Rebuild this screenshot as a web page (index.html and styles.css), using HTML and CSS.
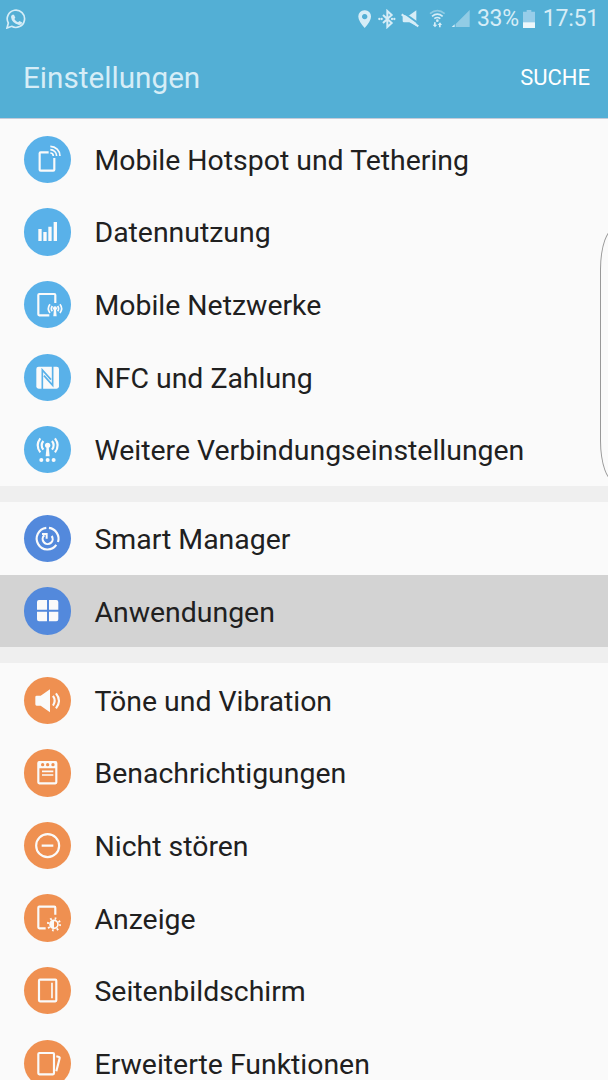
FILE: index.html
```html
<!DOCTYPE html>
<html lang="de">
<head>
	<meta charset="utf-8">
	<title>Einstellungen</title>
	<link rel="stylesheet" href="styles.css">
</head>
<body>
	<div class="phone">
		<div class="header">
			<div class="status">
				<svg class="whatsapp" viewBox="0 0 60 60" fill="none" stroke="#d6edf7">
					<path d="M3 57l4-15a26 26 0 1 1 10 10z" stroke-width="5"/>
					<path d="M19 17l5 0 4 9-3 4q4 7 11 10l4-4 8 4q0 8-9 8-22-6-24-24 0-5 4-7z" fill="#d6edf7" stroke="none"/>
				</svg>
				<svg class="signals" viewBox="0 0 339 60" fill="#d6edf7">
					<path fill-rule="evenodd" d="M20 4a18 18 0 0 1 19 19q0 12-19 34Q1 35 1 23A18 18 0 0 1 20 4zM20 15a8 8 0 1 0 .1 0z"/>
					<path d="M75 18l26 24-13 12V6l13 12-26 24" fill="none" stroke="#d6edf7" stroke-width="6"/>
					<circle cx="64" cy="30" r="3.500"/>
					<circle cx="71" cy="30" r="3.500"/>
					<circle cx="102" cy="30" r="3.500"/>
					<circle cx="109" cy="30" r="3.500"/>
					<path d="M134 19h20l21-15v47l-21-11h-16q-4 0-4-4z"/>
					<path d="M134 9l50 36" stroke="#53afd5" stroke-width="6"/>
					<path d="M131 16l50 36" stroke="#d6edf7" stroke-width="6"/>
					<g fill="none" stroke="#d6edf7" stroke-width="5">
						<path d="M216 14q22-18 44 0" opacity=".45"/>
						<path d="M222 22q16-13 32 0M229 29q9-7 18 0"/>
					</g>
					<circle cx="238" cy="35" r="4"/>
					<path d="M228 40h5v7h5l-7 8-7-8h4zM243 55h5v-7h4l-6-8-7 8h4z"/>
					<path d="M335 3v51h-42v-9z" opacity=".48"/>
					<path d="M281 54l9-8v8z"/>
				</svg>
				<span class="percent">33%</span>
				<svg class="battery" viewBox="0 0 36 54">
					<path d="M0 5h11V0h14v5h11v49H0z" fill="#97cde9"/>
					<path d="M0 37h36v17H0z" fill="#edf7fb"/>
				</svg>
				<span class="time">17:51</span>
			</div>
			<div class="bar">
				<span class="title">Einstellungen</span>
				<span class="search">SUCHE</span>
			</div>
		</div>
		<ul class="list connect">
			<li>
				<svg class="icon" viewBox="0 0 142 142">
					<path class="line" d="M74 49H50q-3 0-3 3v49q0 3 3 3h38q3 0 3-3V66"/>
					<path class="line thin" d="M79 51a9 9 0 0 1 9 9M79 41a19 19 0 0 1 19 19M79 31a29 29 0 0 1 29 29"/>
				</svg>
				<span>Mobile Hotspot und Tethering</span>
			</li>
			<li>
				<svg class="icon" viewBox="0 0 142 142">
					<path class="fill" d="M43 63h10v36H43zM58 72h10v27H58zM73 56h10v43H73zM89 42h10v57H89z"/>
				</svg>
				<span>Datennutzung</span>
			</li>
			<li>
				<svg class="icon" viewBox="0 0 142 142">
					<path class="line" d="M94 66V42q0-3-3-3H46q-3 0-3 3v58q0 3 3 3h30"/>
					<circle class="fill" cx="93" cy="82" r="6"/>
					<path class="fill" d="M90 84h6l2 22h-10z"/>
					<path class="line thin" d="M85 75q-6 8 0 16M101 75q6 8 0 16M78 70q-10 13 0 26M108 70q10 13 0 26"/>
				</svg>
				<span>Mobile Netzwerke</span>
			</li>
			<li>
				<svg class="icon" viewBox="0 0 142 142">
					<rect class="fill" x="37" y="38" width="68" height="66" rx="7"/>
					<path class="cut" d="M55 106V48L81 77M86 36V94L60 65"/>
				</svg>
				<span>NFC und Zahlung</span>
			</li>
			<li>
				<svg class="icon" viewBox="0 0 142 142">
					<circle class="fill" cx="71" cy="58" r="8"/>
					<path class="fill" d="M68 60h6l3 31H65z"/>
					<path class="line" d="M58 45q-10 13 0 26M84 45q10 13 0 26M49 37q-16 21 0 42M93 37q16 21 0 42"/>
					<circle class="fill" cx="52" cy="102" r="6"/>
					<circle class="fill" cx="71" cy="102" r="6"/>
					<circle class="fill" cx="89" cy="102" r="6"/>
				</svg>
				<span>Weitere Verbindungseinstellungen</span>
			</li>
		</ul>
		<ul class="list device">
			<li>
				<svg class="icon" viewBox="0 0 142 142">
					<path class="line" d="M67 38.700a32.500 32.500 0 1 0 30 51.300M102 81a32.500 32.500 0 0 0-27-42.300"/>
					<path class="line" d="M61 61a15 15 0 1 0 22 2"/>
					<path class="fill" d="M54 54h17v17h-6V60H54z"/>
				</svg>
				<span>Smart Manager</span>
			</li>
			<li class="active">
				<svg class="icon" viewBox="0 0 142 142">
					<path class="fill" d="M45 39h24v29H39V45q0-6 6-6zM75 39h22q6 0 6 6v23H75zM39 74h30v29H45q-6 0-6-6zM75 74h28v23q0 6-6 6H75z"/>
				</svg>
				<span>Anwendungen</span>
			</li>
		</ul>
		<ul class="list display">
			<li>
				<svg class="icon" viewBox="0 0 142 142">
					<path class="fill" d="M38 56h12l28-19v69L50 86H38q-4 0-4-4V60q0-4 4-4z"/>
					<path class="line" d="M87 57q10 14 0 29M96 49q18 22 0 45"/>
				</svg>
				<span>Töne und Vibration</span>
			</li>
			<li>
				<svg class="icon" viewBox="0 0 142 142">
					<rect class="line" x="43" y="39" width="54" height="64" rx="3"/>
					<path class="fill" d="M42 38h56v20H42z"/>
					<path class="line thin" d="M54 67h34M54 78h34"/>
					<circle class="dot" cx="56" cy="47" r="5"/>
					<circle class="dot" cx="71" cy="47" r="5"/>
					<circle class="dot" cx="87" cy="47" r="5"/>
				</svg>
				<span>Benachrichtigungen</span>
			</li>
			<li>
				<svg class="icon" viewBox="0 0 142 142">
					<circle class="line" cx="71" cy="71" r="34.500"/>
					<path class="line" d="M53 71h35"/>
				</svg>
				<span>Nicht stören</span>
			</li>
			<li>
				<svg class="icon" viewBox="0 0 142 142">
					<path class="line" d="M94 62V41q0-3-3-3H46q-3 0-3 3v59q0 3 3 3h19"/>
					<circle class="line rays" cx="90" cy="91" r="18"/>
					<circle class="line thin" cx="90" cy="91" r="12"/>
					<path class="fill" d="M90 79a12 12 0 0 0 0 24z"/>
				</svg>
				<span>Anzeige</span>
			</li>
			<li>
				<svg class="icon" viewBox="0 0 142 142">
					<rect class="line" x="45" y="38" width="52" height="65" rx="3"/>
					<path class="line thin" d="M84 47v47"/>
				</svg>
				<span>Seitenbildschirm</span>
			</li>
			<li>
				<svg class="icon" viewBox="0 0 142 142">
					<rect class="line" x="43" y="39" width="47" height="64" rx="3"/>
					<path class="line" d="M97 49l8 2q3 1 2 4l-10 39"/>
				</svg>
				<span>Erweiterte Funktionen</span>
			</li>
		</ul>
		<div class="edge"></div>
	</div>
</body>
</html>
```
FILE: styles.css
```css
body{
	margin: 0;
	background-color: #efefef;
	font-family: Roboto, sans-serif;
	color: #202020;
}
ul{
	list-style: none;
	margin: 0;
	padding: 0;
}
svg{
	display: block;
	flex: none;
}
.phone{
	position: relative;
	width: 608px;
	height: 1080px;
	overflow: hidden;
}
.header{
	height: 118px;
	background-color: #53afd5;
	border-bottom: 1px solid #c5cbd9;
}
.status{
	display: flex;
	align-items: center;
	height: 37px;
	padding: 0 9px 0 6px;
	font-size: 23px;
	color: #d6edf7;
}
.whatsapp{
	width: 20px;
	height: 20px;
}
.signals{
	width: 113px;
	height: 20px;
	margin-left: auto;
}
.percent{
	margin-left: 6px;
	letter-spacing: -0.3px;
}
.battery{
	width: 12px;
	height: 18px;
	margin: 0 8px 0 4px;
}
.time{
	letter-spacing: -0.2px;
}
.bar{
	display: flex;
	align-items: center;
	justify-content: space-between;
	height: 81px;
	padding: 0 18px 0 23px;
}
.title{
	font-size: 29.700px;
	color: #d6edf7;
}
.search{
	font-size: 22px;
	color: #fff;
}
.list{
	margin-bottom: 15.500px;
	background-color: #fafafa;
}
.list li{
	display: flex;
	align-items: center;
	height: 72.600px;
	padding-left: 23.600px;
	font-size: 28.420px;
}
.list .active{
	background-color: #d3d3d3;
}
.list span{
	padding-top: 2px;
	margin-left: 23.600px;
}
.connect{
	padding-top: 4.100px;
}
.device{
	padding-top: 0.600px;
}
.display{
	padding-top: 1.200px;
}
.icon{
	width: 47.300px;
	height: 47.300px;
	border-radius: 50%;
}
.connect .icon{
	background-color: #59b1e9;
}
.device .icon{
	background-color: #5389dc;
}
.display .icon{
	background-color: #ef9051;
}
.fill{
	fill: #fafafa;
}
.line{
	fill: none;
	stroke: #fafafa;
	stroke-width: 6.500;
}
.thin{
	stroke-width: 5;
}
.rays{
	stroke-dasharray: 5 9.140;
}
.cut{
	fill: none;
	stroke: #59b1e9;
	stroke-width: 5;
}
.dot{
	fill: #ef9051;
}
.edge{
	position: absolute;
	top: 228px;
	left: 600px;
	width: 30px;
	height: 254px;
	border: 1px solid #999;
	border-radius: 16px / 44px;
	box-sizing: border-box;
	background-color: #fafafa;
}
```
